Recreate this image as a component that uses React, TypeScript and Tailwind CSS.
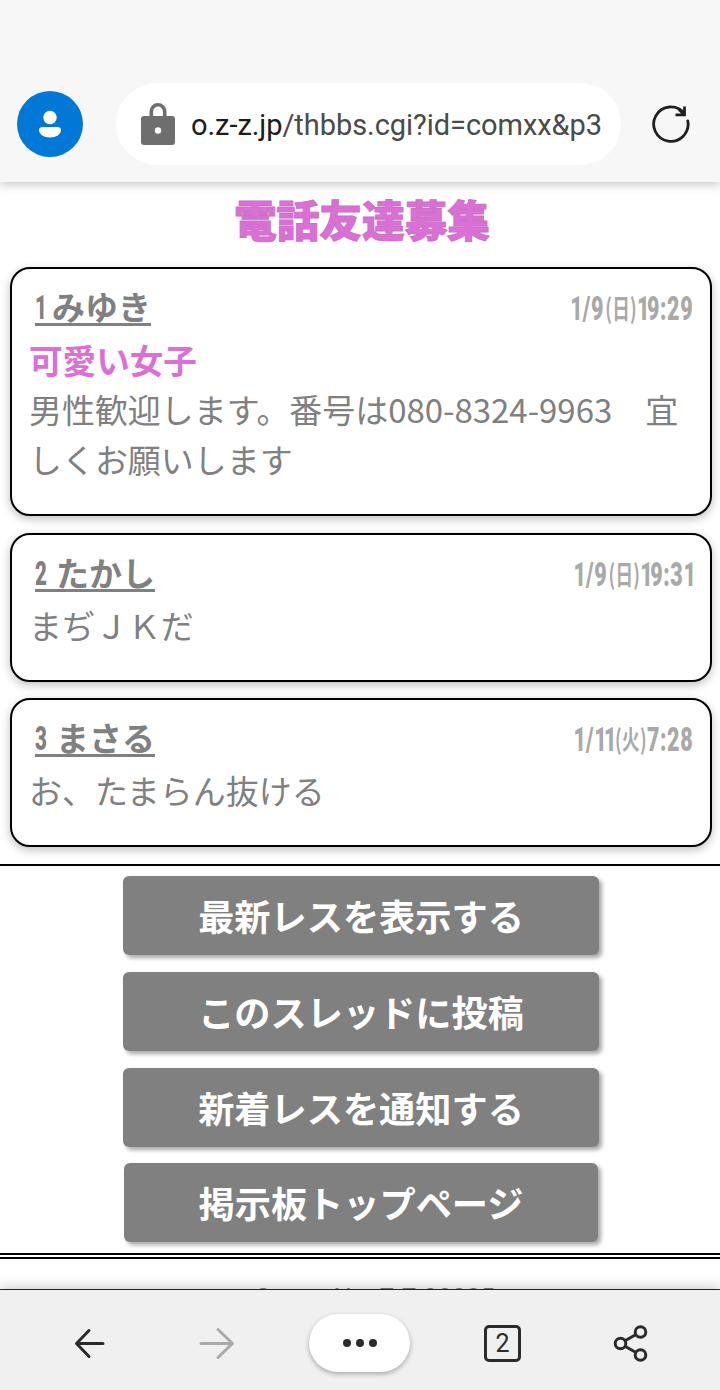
import React from 'react';
import clsx from 'clsx';

interface Post {
  no: number;
  name: string;
  date: string;
  day: string;
  time: string;
  title?: string;
  body: string;
}

const posts: Post[] = [
  {
    no: 1,
    name: 'みゆき',
    date: '1/9',
    day: '日',
    time: '19:29',
    title: '可愛い女子',
    body: '男性歓迎します。番号は080-8324-9963　宜しくお願いします',
  },
  { no: 2, name: 'たかし', date: '1/9', day: '日', time: '19:31', body: 'まぢＪＫだ' },
  { no: 3, name: 'まさる', date: '1/11', day: '火', time: '7:28', body: 'お、たまらん抜ける' },
];

const actions = ['最新レスを表示する', 'このスレッドに投稿', '新着レスを通知する', '掲示板トップページ'];

function AddressBar() {
  return (
    <header className="relative z-10 flex h-[182px] shrink-0 items-start bg-[#f7f7f7] pt-[83px] shadow-[0_2px_10px_rgba(0,0,0,0.25)]">
      <svg className="mt-2 ml-[17px] size-[66px] shrink-0" viewBox="0 0 66 66">
        <circle cx="33" cy="33" r="33" fill="#0078d7" />
        <circle cx="33" cy="26.500" r="6.700" fill="#fff" />
        <path d="M26 36h14c2.600 0 4 1.200 4 3 0 4.500-5 7.500-11 7.500S22 43.500 22 39c0-1.800 1.400-3 4-3z" fill="#fff" />
      </svg>
      <div className="ml-[33px] flex h-[82px] w-[505px] shrink-0 items-center rounded-full bg-white pl-[25px]">
        <svg className="h-[42px] w-[34px] shrink-0" viewBox="0 0 34 42">
          <path d="M10.300 15V8.500a6.700 6.700 0 0 1 13.400 0V15" fill="none" stroke="#6e6e6e" strokeWidth="3.600" />
          <rect y="13" width="34" height="29" rx="3" fill="#6e6e6e" />
          <circle cx="17" cy="27.500" r="3.200" fill="#fff" />
        </svg>
        <div className="mt-[2px] ml-4 w-[413px] overflow-hidden font-['Roboto',sans-serif] text-[29px] leading-10 tracking-[-0.050px] whitespace-nowrap text-[#4a4a4a]">
          <span className="text-[#1b1b1b]">o.z-z.jp</span>/thbbs.cgi?id=comxx&amp;p3=
        </div>
      </div>
      <svg className="mt-[21px] ml-[30px] size-10 shrink-0" viewBox="0 0 40 40" fill="none" stroke="#1f1f1f" strokeWidth="2.800">
        <path d="M36.800 17A17.200 17.200 0 1 1 33 9" strokeLinecap="round" />
        <path d="M33.500 2.500v8.300H24.500M28 5.500l5 5" />
      </svg>
    </header>
  );
}

// The condensed date face has narrow ones and a wide slash
function DateText({ text }: { text: string }) {
  return (
    <>
      {text.split('').map((ch, i) => (
        <span
          key={i}
          className={clsx(
            ch === '1' && 'tracking-[-4px]',
            ch === '/' && 'ml-[4px] tracking-[1px]',
            ch !== '1' && ch !== '/' && 'tracking-[1px]'
          )}
        >
          {ch}
        </span>
      ))}
    </>
  );
}

function PostCard({ post }: { post: Post }) {
  return (
    <article className="rounded-[20px] border-2 border-black bg-white px-[17px] pt-[13px] pb-[30px] shadow-[0_3px_10px_rgba(0,0,0,0.25)]">
      <div className="flex h-[52px] items-start justify-between">
        <a className="ml-[6px] flex h-[44px] text-[33px] leading-[48px] font-bold">
          <span className="flex h-[44px] items-start border-b-[3px] border-[#808080]">
            <span className="mt-[2px] w-[12px] origin-left scale-x-[0.62] font-['Roboto',sans-serif] font-black">{post.no}</span>
            <span className={post.no === 1 ? 'ml-[5px]' : 'ml-[9px]'}>{post.name}</span>
          </span>
        </a>
        <time className="origin-right scale-x-[0.65] font-['Roboto','Noto_Sans_CJK_JP',sans-serif] text-[33px] leading-[53px] font-black whitespace-nowrap text-[#a9a9a9]">
          <DateText text={post.date} />
          <span className="ml-[2px] align-[1px] font-['Noto_Sans_CJK_JP',sans-serif] text-[27px] leading-none font-bold tracking-[0.500px]">({post.day})</span>
          <DateText text={post.time} />
        </time>
      </div>
      {post.title && <h2 className="h-[50px] text-[33.600px] leading-[52px] font-bold text-[#da70d6]">{post.title}</h2>}
      <p className="text-[32.960px] leading-[50px]">{post.body}</p>
    </article>
  );
}

function BottomBar() {
  return (
    <nav className="relative z-10 flex h-[101px] shrink-0 items-start border-t border-[#222] bg-[#f0f0f0] shadow-[0_-2px_12px_rgba(0,0,0,0.2)]">
      <svg className="mt-[38px] ml-[74px] h-8 w-[31px] shrink-0" viewBox="0 0 31 32" fill="none" stroke="#2b2b2b" strokeWidth="3" strokeLinecap="round" strokeLinejoin="round">
        <path d="M29 15.500H3M15 2.500L2.500 15.500 15 28.500" />
      </svg>
      <svg className="mt-[37px] ml-[94px] h-[34px] w-9 shrink-0" viewBox="0 0 36 34" fill="none" stroke="#a9a9a9" strokeWidth="3" strokeLinecap="round" strokeLinejoin="round">
        <path d="M2 16.500h31M19 2.500L33.500 16.500 19 30.500" />
      </svg>
      <button className="mt-6 ml-[74px] flex h-[58px] w-[101px] shrink-0 items-center justify-center gap-[5px] rounded-full bg-white shadow-[0_2px_5px_rgba(0,0,0,0.3)]">
        <span className="size-2 rounded-full bg-[#2b2b2b]" />
        <span className="size-2 rounded-full bg-[#2b2b2b]" />
        <span className="size-2 rounded-full bg-[#2b2b2b]" />
      </button>
      <div className="mt-[35px] ml-[74px] flex size-[37px] shrink-0 items-center justify-center rounded-[5px] border-[3px] border-[#2b2b2b] font-['Roboto',sans-serif] text-[25px] leading-none text-[#2b2b2b]">
        2
      </div>
      <svg className="mt-[35px] ml-[92px] h-[38px] w-[36px] shrink-0" viewBox="0 0 36 38" fill="none" stroke="#2b2b2b" strokeWidth="3">
        <circle cx="7.500" cy="18.500" r="5.300" />
        <circle cx="27.500" cy="7" r="5.300" />
        <circle cx="27.500" cy="30" r="5.300" />
        <path d="M12 15.800L23 9.500M12 21.200L23 27.500" />
      </svg>
    </nav>
  );
}

export default function App() {
  return (
    <div className="flex h-[1390px] w-[720px] flex-col overflow-hidden bg-white font-['Noto_Sans_CJK_JP',sans-serif] text-[#808080]">
      <AddressBar />
      <main className="h-[1107px] shrink-0 overflow-hidden">
        <h1 className="h-[85px] pt-[5px] pl-1 text-center text-[42.700px] leading-[62px] font-black text-[#da70d6] [-webkit-text-stroke:1px_#cb70c8]">
          電話友達募集
        </h1>
        <div className="ml-[10px] flex w-[702px] flex-col gap-[16.600px]">
          {posts.map(post => (
            <PostCard key={post.no} post={post} />
          ))}
        </div>
        <hr className="mt-[16.800px] border-t-2 border-black" />
        <div className="flex flex-col items-center gap-[16.800px] pt-[10px] pl-[2px] text-[36.200px] leading-[79px] font-bold text-white">
          {actions.map(label => (
            <button key={label} className="h-[79px] w-[476px] rounded-[6px] bg-[#808080] shadow-[3px_3px_4px_rgba(0,0,0,0.35)] last:w-[474px]">
              {label}
            </button>
          ))}
        </div>
        <div className="mt-[10.600px] h-[6px] border-y-2 border-black" />
        <footer className="pt-[20px] pl-[30px] text-center font-['Roboto',sans-serif] text-[25.500px]">Server No. Z-Z 00005</footer>
      </main>
      <BottomBar />
    </div>
  );
}
